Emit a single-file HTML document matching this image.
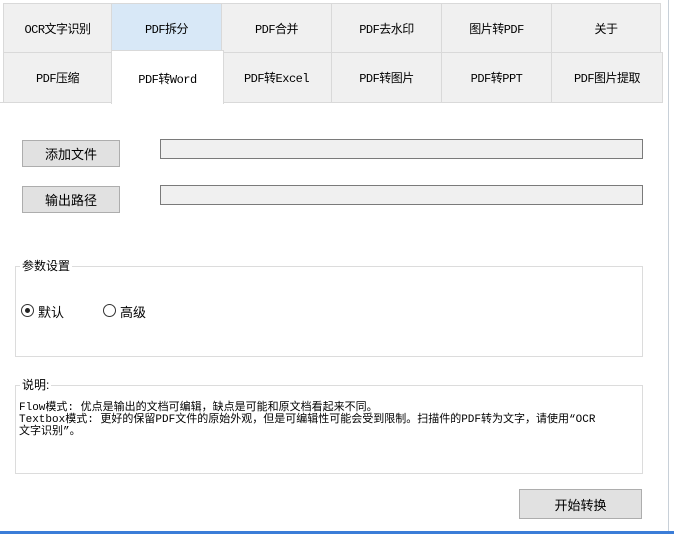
<!DOCTYPE html>
<html><head><meta charset="utf-8"><style>
*{margin:0;padding:0;box-sizing:border-box}
body{width:674px;height:534px;background:#fff;position:relative;overflow:hidden;font-family:"Liberation Sans","Noto Sans CJK SC","WenQuanYi Zen Hei",sans-serif;font-size:12px;color:#000}
.a{position:absolute}
.tab{position:absolute;background:#f0f0f0;border:1px solid #d9d9d9;display:flex;align-items:center;justify-content:center;font-size:12px;font-family:"Liberation Mono","Noto Sans CJK SC",monospace;letter-spacing:-0.5px}
.btn{position:absolute;background:#e1e1e1;border:1px solid #adadad;display:flex;align-items:center;justify-content:center;font-size:13px}
.tb{position:absolute;background:#f0f0f0;border:1px solid #7a7a7a}
.grp{position:absolute;border:1px solid #dcdcdc}
.lg{position:absolute;background:#fff;padding:0 2px;font-size:12px}
.rad{position:absolute;width:13px;height:13px;border:1px solid #333;border-radius:50%;background:#fff}
</style></head><body>
<div class="tab" style="left:3px;top:3px;width:109px;height:50px">OCR文字识别</div>
<div class="tab" style="left:111px;top:3px;width:111px;height:50px;background:#d8e8f7">PDF拆分</div>
<div class="tab" style="left:221px;top:3px;width:111px;height:50px">PDF合并</div>
<div class="tab" style="left:331px;top:3px;width:111px;height:50px">PDF去水印</div>
<div class="tab" style="left:441px;top:3px;width:111px;height:50px">图片转PDF</div>
<div class="tab" style="left:551px;top:3px;width:110px;height:50px">关于</div>
<div class="tab" style="left:3px;top:52px;width:109px;height:51px">PDF压缩</div>
<div class="tab" style="left:221px;top:52px;width:111px;height:51px">PDF转Excel</div>
<div class="tab" style="left:331px;top:52px;width:111px;height:51px">PDF转图片</div>
<div class="tab" style="left:441px;top:52px;width:111px;height:51px">PDF转PPT</div>
<div class="tab" style="left:551px;top:52px;width:112px;height:51px">PDF图片提取</div>
<div class="tab" style="left:111px;top:50px;width:113px;height:54px;background:#fff;border-bottom:none;align-items:flex-start;padding-top:19px">PDF转Word</div>
<div class="a" style="left:0;top:102px;width:111px;height:1px;background:#d9d9d9"></div>
<div class="a" style="left:668px;top:0;width:1px;height:534px;background:#c8d0d8"></div>

<div class="btn" style="left:22px;top:140px;width:98px;height:27px">添加文件</div>
<div class="tb" style="left:160px;top:139px;width:483px;height:20px"></div>
<div class="btn" style="left:22px;top:186px;width:98px;height:27px">输出路径</div>
<div class="tb" style="left:160px;top:185px;width:483px;height:20px"></div>

<div class="grp" style="left:15px;top:266px;width:628px;height:91px"></div>
<div class="lg" style="left:20px;top:257px">参数设置</div>
<div class="rad" style="left:21px;top:304px"><div class="a" style="left:3px;top:3px;width:5px;height:5px;border-radius:50%;background:#222"></div></div>
<div class="a" style="left:38px;top:302px;font-size:13px">默认</div>
<div class="rad" style="left:103px;top:304px"></div>
<div class="a" style="left:120px;top:302px;font-size:13px">高级</div>

<div class="grp" style="left:15px;top:385px;width:628px;height:89px"></div>
<div class="lg" style="left:20px;top:376px">说明:</div>
<div class="a" style="left:19px;top:402px;font-size:11px;line-height:12px;width:625px;font-family:'Liberation Mono','Noto Sans CJK SC',monospace;white-space:nowrap">Flow模式: 优点是输出的文档可编辑，缺点是可能和原文档看起来不同。<br>Textbox模式: 更好的保留PDF文件的原始外观，但是可编辑性可能会受到限制。扫描件的PDF转为文字，请使用“OCR<br>文字识别”。</div>

<div class="btn" style="left:519px;top:489px;width:123px;height:30px;font-size:13px">开始转换</div>
<div class="a" style="left:0;top:531px;width:674px;height:3px;background:#3b7dd8"></div>
</body></html>
